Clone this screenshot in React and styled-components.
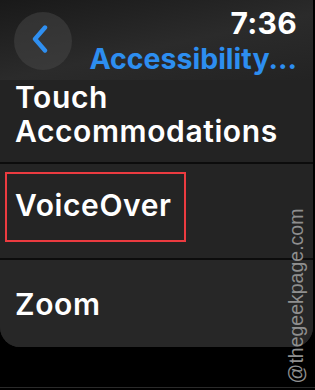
import styled, { createGlobalStyle } from "styled-components";

const GlobalStyle = createGlobalStyle`
  html, body {
    margin: 0;
    padding: 0;
    background: #000;
  }
`;

const Screen = styled.div`
  position: relative;
  width: 315px;
  height: 390px;
  overflow: hidden;
  background: #000;
  font-family: Inter, "Noto Sans", sans-serif;
  color: #fff;
`;

const Header = styled.div`
  height: 80px;
  display: flex;
  justify-content: space-between;
  align-items: flex-start;
  padding: 0 16px 0 14px;
  box-sizing: border-box;
  background: linear-gradient(168deg, #191919 0%, #262626 40%, #2b2b2b 55%, #232323 100%);
  width: 313px;
`;

const BackButton = styled.button`
  margin-top: 12px;
  width: 58px;
  height: 58px;
  border-radius: 50%;
  border: none;
  background: rgba(72, 72, 72, 0.5);
  display: flex;
  align-items: center;
  justify-content: center;
  padding: 0 6px 4px 0;
  cursor: pointer;
`;

const TitleBlock = styled.div`
  display: flex;
  flex-direction: column;
  align-items: flex-end;
`;

const Time = styled.div`
  margin-top: 6px;
  font-size: 30px;
  font-weight: 700;
  line-height: 34px;
  letter-spacing: 0.3px;
`;

const Title = styled.div`
  margin-top: 1px;
  font-size: 28.5px;
  font-weight: 700;
  line-height: 36px;
  color: #2d8ef0;
`;

const List = styled.div`
  width: 313px;
  background: #242424;
  border-radius: 0 0 20px 20px;
`;

const Row = styled.div`
  display: flex;
  align-items: ${(p) => (p.$top ? "flex-start" : "center")};
  height: ${(p) => p.$height}px;
  padding: ${(p) => p.$pad || "0 0 0 15px"};
  box-sizing: border-box;
  border-bottom: ${(p) => (p.$last ? "none" : "2px solid #0c0c0c")};
  background: ${(p) => p.$bg || "transparent"};
  border-radius: ${(p) => (p.$last ? "0 0 20px 20px" : "0")};
`;

const Label = styled.div`
  font-size: 30px;
  font-weight: 600;
  line-height: 34px;
  letter-spacing: 0.6px;
`;

const Highlight = styled.div`
  display: flex;
  align-items: center;
  width: 181px;
  height: 70px;
  box-sizing: border-box;
  padding: 0 0 4px 8px;
  border: 2px solid #ec3b40;
`;

const BottomLine = styled.div`
  position: absolute;
  left: 0;
  right: 0;
  top: 387px;
  height: 1px;
  background: #2a2a2a;
`;

const Watermark = styled.div`
  position: absolute;
  left: 296px;
  top: 296px;
  transform: translate(-50%, -50%) rotate(-90deg);
  font-family: "Liberation Sans", Arial, sans-serif;
  font-size: 19.5px;
  color: #8f8f8f;
  white-space: nowrap;
`;

export default function App() {
  return (
    <>
      <GlobalStyle />
      <Screen>
        <Header>
          <BackButton aria-label="Back">
            <svg width="20" height="28" viewBox="0 0 20 28">
              <path
                d="M15 2.5 L5 14 L15 25.5"
                fill="none"
                stroke="#2f8ff0"
                strokeWidth="4.4"
                strokeLinecap="round"
                strokeLinejoin="round"
              />
            </svg>
          </BackButton>
          <TitleBlock>
            <Time>7:36</Time>
            <Title>Accessibility...</Title>
          </TitleBlock>
        </Header>
        <List>
          <Row $height={84} $top $bg="#232323">
            <Label>
              Touch
              <br />
              Accommodations
            </Label>
          </Row>
          <Row $height={96} $top $pad="8px 0 0 5px">
            <Highlight>
              <Label>VoiceOver</Label>
            </Highlight>
          </Row>
          <Row $height={87} $last $bg="#272727">
            <Label>Zoom</Label>
          </Row>
        </List>
        <BottomLine />
        <Watermark>@thegeekpage.com</Watermark>
      </Screen>
    </>
  );
}
